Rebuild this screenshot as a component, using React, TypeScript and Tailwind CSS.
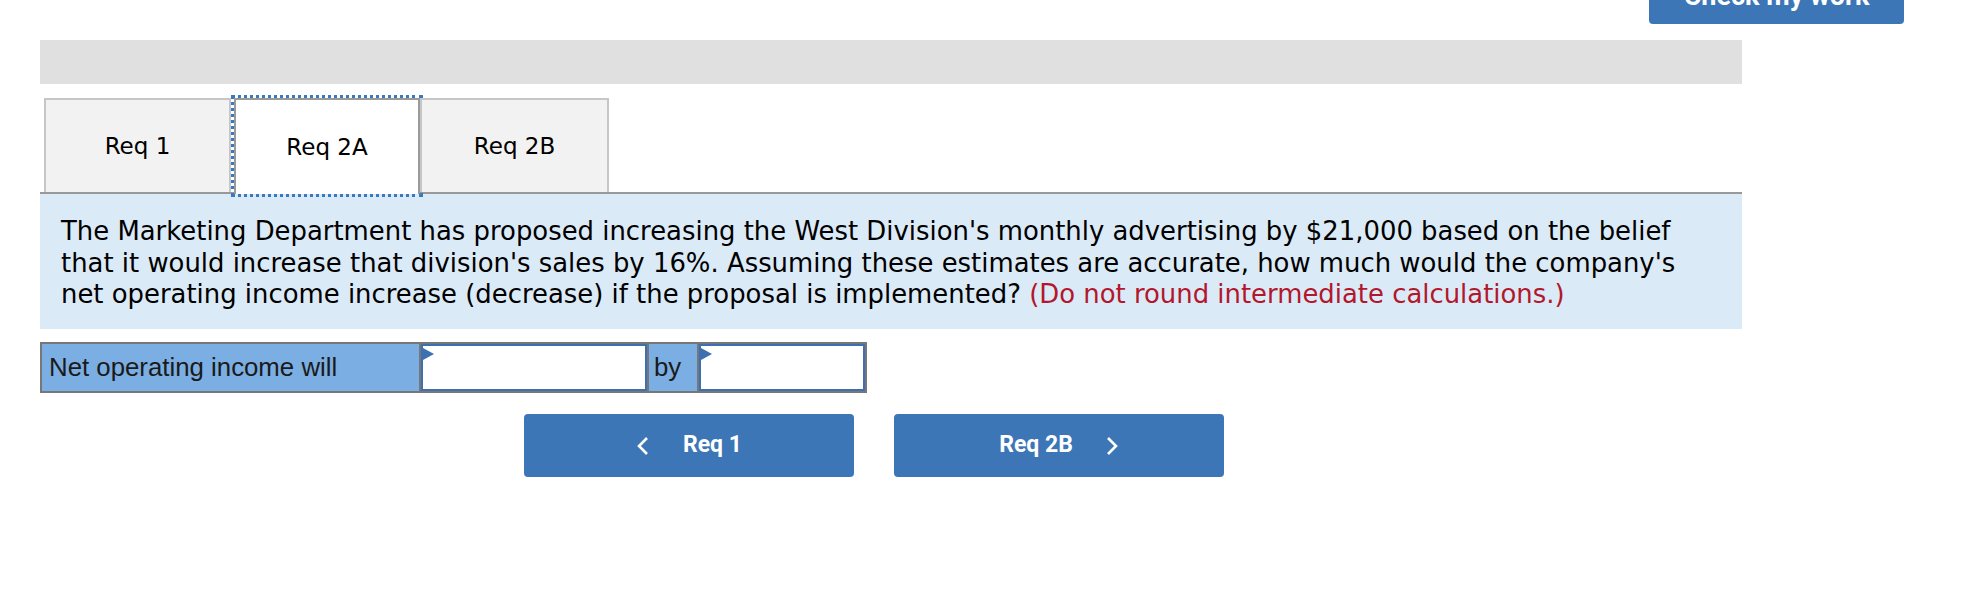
export default function App() {
  const tabs = [
    { label: "Req 1", active: false, w: "w-[187px]" },
    { label: "Req 2A", active: true, w: "w-[186px]" },
    { label: "Req 2B", active: false, w: "w-[189px]" },
  ];

  return (
    <div className="w-[1984px] h-[604px] bg-white overflow-hidden">
      <div className="flex justify-end pr-[80px] h-[24px]">
        <button className="w-[255px] h-[56px] -mt-[32px] rounded-[4px] bg-[#3c76b6] text-white font-['Roboto',sans-serif] font-bold text-[27px]">
          Check my work
        </button>
      </div>

      <div className="ml-[40px] w-[1702px] mt-[16px]">
        <div className="h-[44px] bg-[#e0e0e0]" />

        {/* tabs */}
        <div className="mt-[14px] flex items-end pl-[4px] border-b-2 border-[#999999] h-[96px]">
          {tabs.map((t) =>
            t.active ? (
              <div
                key={t.label}
                className={`${t.w} ml-[3px] h-[96px] -mb-[2px] bg-white border-2 border-b-0 border-[#9a9a9a] outline-[3px] outline-dotted outline-[#3b78c2] outline-offset-[0px] flex items-center justify-center font-['DejaVu_Sans',Verdana,sans-serif] text-[23px] text-black`}
              >
                {t.label}
              </div>
            ) : (
              <div
                key={t.label}
                className={`${t.w} h-[94px] bg-[#f2f2f2] border-2 border-b-0 border-[#c6c6c6] flex items-center justify-center font-['DejaVu_Sans',Verdana,sans-serif] text-[23px] text-black`}
              >
                {t.label}
              </div>
            )
          )}
        </div>

        {/* question */}
        <div className="bg-[#dbeaf7] h-[135px] pt-[22px] pl-[21px] font-['DejaVu_Sans',Verdana,sans-serif] text-[25.9px] leading-[31.5px] text-black">
          The Marketing Department has proposed increasing the West Division's monthly advertising by $21,000 based on the belief
          <br />
          that it would increase that division's sales by 16%. Assuming these estimates are accurate, how much would the company's
          <br />
          net operating income increase (decrease) if the proposal is implemented?{" "}
          <span className="text-[#b3172b]">(Do not round intermediate calculations.)</span>
        </div>

        {/* answer row */}
        <div className="mt-[13px] flex w-[827px] h-[51px] border-2 border-[#777777] font-['Liberation_Sans',Arial,sans-serif] text-[25.8px] text-[#1a1a1a]">
          <div className="w-[379px] bg-[#7baee2] border-r-2 border-[#777777] flex items-center pl-[7px]">
            Net operating income will
          </div>
          <div className="relative w-[226px] bg-white border-2 border-[#3d6fb3]">
            <span className="absolute left-0 top-[2px] w-0 h-0 border-y-[6px] border-y-transparent border-l-[11px] border-l-[#3d6fb3]" />
          </div>
          <div className="w-[52px] bg-[#7baee2] border-x-2 border-[#777777] flex items-center pl-[5px]">
            by
          </div>
          <div className="relative flex-1 bg-white border-2 border-[#3d6fb3]">
            <span className="absolute left-0 top-[2px] w-0 h-0 border-y-[6px] border-y-transparent border-l-[11px] border-l-[#3d6fb3]" />
          </div>
        </div>

        {/* nav */}
        <div className="mt-[21px] ml-[484px] flex gap-[40px] font-['Roboto',sans-serif] font-bold text-[23px] text-white">
          <button className="w-[330px] h-[63px] rounded-[4px] bg-[#3c76b6] flex items-center justify-center gap-[34px]">
            <svg width="13" height="18" viewBox="0 0 13 18" fill="none">
              <polyline points="11,1 3,9 11,17" stroke="white" strokeWidth="2.6" />
            </svg>
            <span>Req 1</span>
          </button>
          <button className="w-[330px] h-[63px] rounded-[4px] bg-[#3c76b6] flex items-center justify-center gap-[33px]">
            <span>Req 2B</span>
            <svg width="13" height="18" viewBox="0 0 13 18" fill="none">
              <polyline points="2,1 10,9 2,17" stroke="white" strokeWidth="2.6" />
            </svg>
          </button>
        </div>
      </div>
    </div>
  );
}
